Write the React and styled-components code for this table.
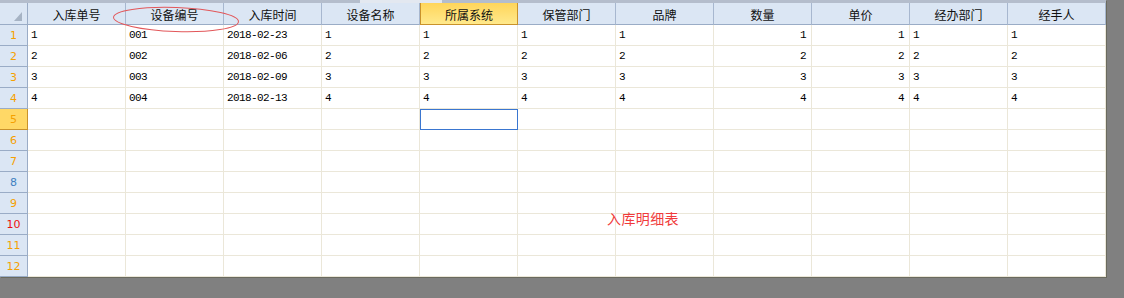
import styled, { createGlobalStyle, css } from 'styled-components'

const GlobalStyle = createGlobalStyle`
  html, body {
    margin: 0;
    padding: 0;
    background: #808080;
  }
  #root {
    width: 1124px;
    height: 298px;
    overflow: hidden;
  }
`

const columns = [
  { title: '入库单号', key: 'no' },
  { title: '设备编号', key: 'code' },
  { title: '入库时间', key: 'date' },
  { title: '设备名称', key: 'name' },
  { title: '所属系统', key: 'sys' },
  { title: '保管部门', key: 'dept' },
  { title: '品牌', key: 'brand' },
  { title: '数量', key: 'qty', right: true },
  { title: '单价', key: 'price', right: true },
  { title: '经办部门', key: 'handleDept' },
  { title: '经手人', key: 'handler' },
]

const rows = [
  { no: '1', code: '001', date: '2018-02-23', name: '1', sys: '1', dept: '1', brand: '1', qty: '1', price: '1', handleDept: '1', handler: '1' },
  { no: '2', code: '002', date: '2018-02-06', name: '2', sys: '2', dept: '2', brand: '2', qty: '2', price: '2', handleDept: '2', handler: '2' },
  { no: '3', code: '003', date: '2018-02-09', name: '3', sys: '3', dept: '3', brand: '3', qty: '3', price: '3', handleDept: '3', handler: '3' },
  { no: '4', code: '004', date: '2018-02-13', name: '4', sys: '4', dept: '4', brand: '4', qty: '4', price: '4', handleDept: '4', handler: '4' },
]

const ROW_COUNT = 12
const ACTIVE_COL = 4
const ACTIVE_ROW = 4

const rowNumColor = (n) => {
  if (n === 8) return '#3f7fc0'
  if (n === 10) return '#ee1111'
  return '#f5a000'
}

const Sheet = styled.div`
  position: relative;
  width: 1106px;
  background: #fff;
  box-shadow: 1px 1px 0 #6a6a5e;
`

const TopStrip = styled.div`
  height: 3px;
  background: linear-gradient(to right, #b4bdcc 0, #b4bdcc 360px, #e3e8f0 360px, #e3e8f0 442px, #b4bdcc 442px);
`

const Grid = styled.div`
  display: grid;
  grid-template-columns: 28px repeat(11, 98px);
  grid-template-rows: 22px repeat(${ROW_COUNT}, 21px);
`

const Corner = styled.div`
  position: relative;
  background: #dbe6f4;
  border-right: 1px solid #9aacc6;
  border-bottom: 1px solid #9aacc6;
  box-sizing: border-box;

  &::after {
    content: '';
    position: absolute;
    right: 5px;
    bottom: 3px;
    width: 0;
    height: 0;
    border-left: 8px solid transparent;
    border-bottom: 9px solid #a6b3c4;
  }
`

const HeadCell = styled.div`
  box-sizing: border-box;
  display: flex;
  align-items: center;
  justify-content: center;
  padding-top: 1px;
  font-family: "Noto Sans CJK SC", sans-serif;
  font-size: 12px;
  color: #111;
  background: #dbe6f4;
  border-right: 1px solid #a7b7cf;
  border-bottom: 1px solid #9aacc6;

  ${(p) => p.$active && css`
    background: linear-gradient(to bottom, #ffd55a, #ffe98c);
    border: 1px solid #c9922b;
    border-top: none;
  `}
`

const RowHead = styled.div`
  box-sizing: border-box;
  display: flex;
  align-items: center;
  justify-content: center;
  font-family: "DejaVu Sans", sans-serif;
  font-size: 11px;
  color: ${(p) => p.$color};
  background: #dbe6f4;
  border-right: 1px solid #9aacc6;
  border-bottom: 1px solid #9aacc6;

  ${(p) => p.$active && css`
    background: #ffd866;
    border: 1px solid #c9922b;
    border-left: none;
    border-top: none;
    padding-top: 1px;
  `}
`

const Cell = styled.div`
  box-sizing: border-box;
  display: flex;
  align-items: center;
  justify-content: ${(p) => (p.$right ? 'flex-end' : 'flex-start')};
  padding: 0 5px 0 3px;
  font-family: "Liberation Mono", monospace;
  font-size: 11px;
  letter-spacing: -0.6px;
  color: #000;
  border-right: 1px solid #ebe7d9;
  border-bottom: 1px solid #ebe7d9;

  ${(p) => p.$selected && css`
    outline: 1px solid #3a76d0;
    outline-offset: -1px;
    border-right-color: #3a76d0;
    border-bottom-color: #3a76d0;
    margin-left: 0;
  `}
`

const Ellipse = styled.svg`
  position: absolute;
  left: 110px;
  top: 5px;
  pointer-events: none;
`

const Caption = styled.div`
  position: absolute;
  left: 607px;
  top: 208px;
  font-family: "Noto Sans CJK SC", sans-serif;
  font-size: 14px;
  letter-spacing: 0.4px;
  color: #f03a3a;
`

export default function App() {
  return (
    <>
      <GlobalStyle />
      <Sheet>
        <TopStrip />
        <Grid>
          <Corner />
          {columns.map((c, i) => (
            <HeadCell key={c.key} $active={i === ACTIVE_COL}>{c.title}</HeadCell>
          ))}
          {Array.from({ length: ROW_COUNT }, (_, r) => {
            const row = rows[r] || {}
            return [
              <RowHead key={`h${r}`} $color={rowNumColor(r + 1)} $active={r === ACTIVE_ROW}>{r + 1}</RowHead>,
              ...columns.map((c, i) => (
                <Cell
                  key={`${r}-${c.key}`}
                  $right={c.right}
                  $selected={r === ACTIVE_ROW && i === ACTIVE_COL}
                >
                  {row[c.key] || ''}
                </Cell>
              )),
            ]
          })}
        </Grid>
        <Ellipse width="132" height="30" viewBox="0 0 132 30">
          <ellipse cx="66" cy="14.5" rx="62.5" ry="12" fill="none" stroke="#e2575a" strokeWidth="1" transform="rotate(2 66 14.5)" />
        </Ellipse>
        <Caption>入库明细表</Caption>
      </Sheet>
    </>
  )
}
